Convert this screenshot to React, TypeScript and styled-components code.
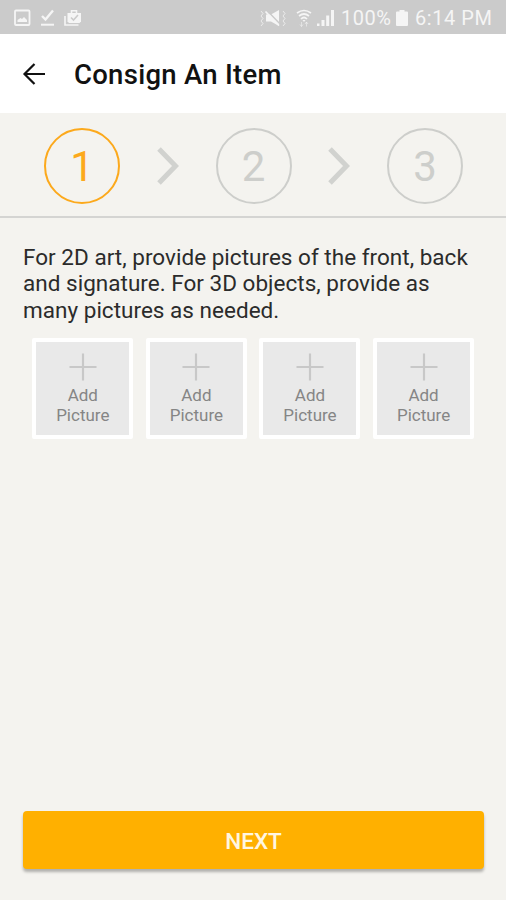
import React from "react";
import styled, { createGlobalStyle } from "styled-components";

const GlobalStyle = createGlobalStyle`
  * { box-sizing: border-box; }
  body {
    margin: 0;
    background: #f4f3ef;
    font-family: Roboto, "Liberation Sans", sans-serif;
  }
`;

const Screen = styled.main`
  width: 506px;
  height: 900px;
  display: flex;
  flex-direction: column;
  overflow: hidden;
  background: #f4f3ef;
`;

const StatusBar = styled.div`
  height: 34px;
  flex: none;
  display: flex;
  align-items: center;
  justify-content: space-between;
  padding: 1px 13px 0 13px;
  background: #cbcbcb;
  color: #f5f5f5;
`;

const StatusGroup = styled.div`
  display: flex;
  align-items: center;
`;

const StatusText = styled.span<{ $width: number }>`
  width: ${(p) => p.$width}px;
  font-size: 20px;
  line-height: 24px;
  letter-spacing: 0.55px;
  white-space: nowrap;
  padding-top: 1px;
`;

const Glyph = styled.svg<{ $gap?: number }>`
  display: block;
  flex: none;
  margin-right: ${(p) => p.$gap ?? 0}px;
`;

const Header = styled.header`
  height: 79px;
  flex: none;
  display: flex;
  align-items: center;
  gap: 28px;
  padding: 0 0 0 22px;
  background: #fff;
`;

const BackButton = styled.button`
  display: block;
  padding: 0;
  border: 0;
  background: none;
  color: #111;
`;

const Title = styled.h1`
  margin: 3px 0 0;
  font-size: 27.5px;
  line-height: 32px;
  letter-spacing: 0.28px;
  font-weight: 500;
  color: #111;
  white-space: nowrap;
`;

const Stepper = styled.nav`
  height: 105px;
  flex: none;
  display: flex;
  align-items: center;
  justify-content: space-between;
  padding: 2px 43px 0 44px;
  border-bottom: 2px solid #d4d4d2;
`;

const Step = styled.div<{ $active?: boolean }>`
  width: 76px;
  height: 76px;
  display: flex;
  align-items: center;
  justify-content: center;
  padding-top: 3px;
  border: 2px solid ${(p) => (p.$active ? "#fca91c" : "#cdcecb")};
  border-radius: 50%;
  color: ${(p) => (p.$active ? "#fca91c" : "#cdcecb")};
  font-size: 42px;
  line-height: 48px;
`;

const Content = styled.section`
  flex: 1;
  padding: 26px 23px 0 23px;
`;

const Instructions = styled.p`
  margin: 0;
  font-size: 22.5px;
  line-height: 26.4px;
  letter-spacing: 0.02px;
  color: #2b2b2b;
  white-space: nowrap;
`;

const Tiles = styled.div`
  display: flex;
  gap: 12.6px;
  padding: 14.8px 0 0 9.3px;
`;

const Tile = styled.button`
  width: 101px;
  height: 101px;
  flex: none;
  display: flex;
  flex-direction: column;
  align-items: center;
  padding: 11px 0 0;
  border: 4.5px solid #fff;
  border-radius: 2px;
  background: #e9e9e9;
  color: #858585;
  font-family: inherit;
  font-size: 17px;
  line-height: 20px;
`;

const TileLabel = styled.span`
  margin-top: 4px;
  text-align: center;
`;

const Footer = styled.footer`
  flex: none;
  padding: 0 22px 31px 23px;
`;

const NextButton = styled.button`
  display: block;
  width: 100%;
  height: 58px;
  padding: 2px 0 0;
  border: 0;
  border-radius: 4px;
  background: #ffb000;
  box-shadow: 0 3px 3px rgba(0, 0, 0, 0.28);
  color: #fff6e2;
  font-family: inherit;
  font-size: 22.5px;
  font-weight: 500;
`;

const Chevron = () => (
  <Glyph width="24" height="42" viewBox="0 0 24 42" fill="none">
    <path d="M3 4L19.5 21L3 38" stroke="#d1d2cf" strokeWidth="5" />
  </Glyph>
);

const Plus = () => (
  <Glyph width="28" height="28" viewBox="0 0 28 28" fill="none">
    <path d="M14 .5V27.5M.5 14H27.5" stroke="#c8c8c8" strokeWidth="2.2" />
  </Glyph>
);

const PictureIcon = () => (
  <Glyph width="18" height="18" viewBox="0 0 18 18" fill="none" $gap={9}>
    <rect x="2" y="1.5" width="14.5" height="14.5" rx="1" stroke="currentColor" strokeWidth="1.8" />
    <path d="M4.5 13V11L7.5 9L9 10L11 8L14 11V13Z" fill="currentColor" />
  </Glyph>
);

const DoneIcon = () => (
  <Glyph width="15" height="18" viewBox="0 0 15 18" fill="none" $gap={8}>
    <path d="M2 7L5.5 10.5L13 1.5" stroke="currentColor" strokeWidth="2.4" />
    <path d="M1 15.7H14" stroke="currentColor" strokeWidth="2" />
  </Glyph>
);

const BagIcon = () => (
  <Glyph width="19" height="18" viewBox="0 0 19 18" fill="none">
    <path d="M2 7V16H15.5" stroke="currentColor" strokeWidth="1.6" />
    <path d="M8.5 4V1.8H13.5V4" stroke="currentColor" strokeWidth="1.6" />
    <path d="M4.5 4H18V12.5L16.5 14H6L4.5 12.5Z" fill="currentColor" />
    <path d="M8 8.5L10.5 11L15 6" stroke="#cbcbcb" strokeWidth="1.6" />
  </Glyph>
);

const MuteIcon = () => (
  <Glyph width="28" height="18" viewBox="0 0 28 18" fill="none" $gap={9}>
    <path d="M2 2L4 4.5L2 7L4 9.5L2 12L4 14.5L2 17M24 2L26 4.5L24 7L26 9.5L24 12L26 14.5L24 17" stroke="currentColor" strokeWidth="1" opacity=".75" />
    <path d="M7 5.5H12L20 1V17L12 12.5H7Z" fill="currentColor" />
    <path d="M8 1.5L22 16" stroke="#cbcbcb" strokeWidth="1.6" />
    <path d="M6.5 2.5L20 16.5" stroke="currentColor" strokeWidth="1.8" />
  </Glyph>
);

const WifiIcon = () => (
  <Glyph width="16" height="18" viewBox="0 0 16 18" fill="none" $gap={5}>
    <path d="M1 4Q8-1 15 4M3 7Q8 3 13 7M5 10Q8 7 11 10" stroke="currentColor" strokeWidth="1.7" />
    <path d="M6.5 11H9.5L8 13Z" fill="currentColor" />
    <path d="M5.5 13V17.5M4 15.5L5.5 17.5L7 15.5M10.5 17.5V13M9 15L10.5 13L12 15" stroke="currentColor" strokeWidth=".9" opacity=".6" />
  </Glyph>
);

const SignalIcon = () => (
  <Glyph width="18" height="18" viewBox="0 0 18 18" fill="currentColor" $gap={6}>
    <path d="M0 14.5H2.5V17H0ZM4.5 11H7.5V17H4.5ZM9.2 6.5H12.2V17H9.2ZM14 1H17V17H14Z" />
  </Glyph>
);

const BatteryIcon = () => (
  <Glyph width="12" height="18" viewBox="0 0 12 18" fill="currentColor" $gap={7}>
    <path d="M3.5 1H8.5V2.5H11Q12 2.5 12 3.5V16Q12 17 11 17H1Q0 17 0 16V3.5Q0 2.5 1 2.5H3.5Z" />
  </Glyph>
);

const BackArrow = () => (
  <Glyph width="24" height="24" viewBox="0 0 24 24" fill="none">
    <path d="M23 12H2.5M12.5 2L2.5 12L12.5 22" stroke="currentColor" strokeWidth="2.2" />
  </Glyph>
);

const pictureSlots = [1, 2, 3, 4];

export default function App() {
  return (
    <>
      <GlobalStyle />
      <Screen>
        <StatusBar>
          <StatusGroup>
            <PictureIcon />
            <DoneIcon />
            <BagIcon />
          </StatusGroup>
          <StatusGroup>
            <MuteIcon />
            <WifiIcon />
            <SignalIcon />
            <StatusText $width={55}>100%</StatusText>
            <BatteryIcon />
            <StatusText $width={78}>6:14 PM</StatusText>
          </StatusGroup>
        </StatusBar>
        <Header>
          <BackButton aria-label="Back">
            <BackArrow />
          </BackButton>
          <Title>Consign An Item</Title>
        </Header>
        <Stepper>
          <Step $active>1</Step>
          <Chevron />
          <Step>2</Step>
          <Chevron />
          <Step>3</Step>
        </Stepper>
        <Content>
          <Instructions>
            For 2D art, provide pictures of the front, back
            <br />
            and signature. For 3D objects, provide as
            <br />
            many pictures as needed.
          </Instructions>
          <Tiles>
            {pictureSlots.map((slot) => (
              <Tile key={slot}>
                <Plus />
                <TileLabel>
                  Add
                  <br />
                  Picture
                </TileLabel>
              </Tile>
            ))}
          </Tiles>
        </Content>
        <Footer>
          <NextButton>NEXT</NextButton>
        </Footer>
      </Screen>
    </>
  );
}
